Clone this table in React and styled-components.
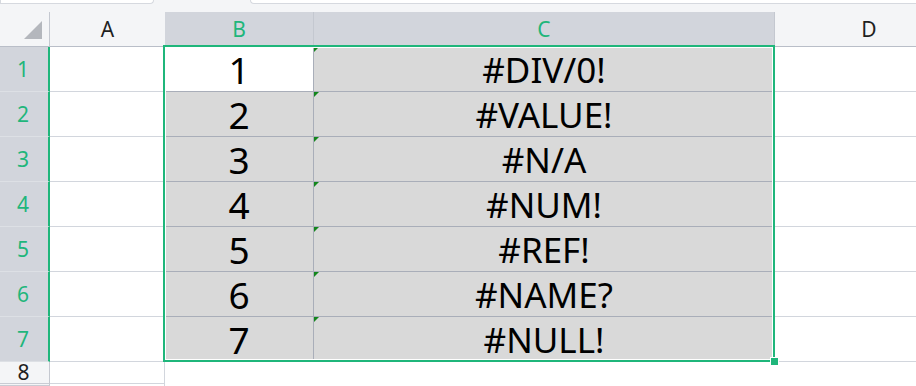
import React from "react";
import styled, { createGlobalStyle, css } from "styled-components";

//Sheet data: column B holds the index, column C the error value
const ROWS = [
  [1, "#DIV/0!"],
  [2, "#VALUE!"],
  [3, "#N/A"],
  [4, "#NUM!"],
  [5, "#REF!"],
  [6, "#NAME?"],
  [7, "#NULL!"],
];

const COLUMNS = ["A", "B", "C", "D"];
const SELECTED_COLS = ["B", "C"];

const GREEN = "#1fb67b";
const GRID = "#d2d6dd";
const GRID_DARK = "#a9aeb9";
const HEAD_BG = "#f4f5f7";
const HEAD_SEL = "#d2d5dc";

//------------------------------------------------------------//

const App = () => {
  return (
    <>
      <GlobalStyle />
      <TOPSTRIP>
        <NAMEBOX />
        <FORMULABOX />
      </TOPSTRIP>

      <SHEET>
        <CORNER>
          <CornerMark />
        </CORNER>
        {COLUMNS.map((col) => (
          <COLHEAD key={col} $selected={SELECTED_COLS.includes(col)}>
            {col}
          </COLHEAD>
        ))}

        {ROWS.map(([num, err], i) => (
          <React.Fragment key={num}>
            <ROWHEAD $selected>{i + 1}</ROWHEAD>
            <CELL />
            <CELL $selected $active={i === 0} $big>
              {num}
            </CELL>
            <CELL $selected>
              <ERRORMARK />
              {err}
            </CELL>
            <CELL />
          </React.Fragment>
        ))}

        {/* rows below the data block */}
        <ROWHEAD>8</ROWHEAD>
        <CELL />
        <CELL $plain />
        <CELL $plain />
        <CELL $plain />

        <ROWHEAD />
        <CELL $open />
        <CELL $plain />
        <CELL $plain />
        <CELL $plain />

        {/* range outline drawn over B1:C7 */}
        <SELECTION>
          <FILLHANDLE />
        </SELECTION>
      </SHEET>
    </>
  );
};

const CornerMark = () => (
  <svg width="18" height="18" viewBox="0 0 18 18">
    <polygon points="18,0 18,18 0,18" fill="#b4b7bd" />
  </svg>
);

/*-----------------------*\
            CSS
\*-----------------------*/

const GlobalStyle = createGlobalStyle`
  * {
    box-sizing: border-box;
  }

  body {
    margin: 0;
    background: #fff;
    font-family: "Noto Sans", "Open Sans", sans-serif;
    overflow: hidden;
  }
`;

const TOPSTRIP = styled.div`
  height: 12px;
  background: ${HEAD_BG};
  display: flex;
  align-items: flex-start;
  justify-content: space-between;
`;

const NAMEBOX = styled.div`
  width: 154px;
  height: 4px;
  background: #fff;
  border: 1px solid #d6d9df;
  border-top: 0;
  border-radius: 0 0 4px 0;
`;

const FORMULABOX = styled.div`
  width: 666px;
  height: 4px;
  background: #fff;
  border: 1px solid #d6d9df;
  border-top: 0;
  border-right: 0;
  border-radius: 0 0 0 4px;
`;

const SHEET = styled.div`
  position: relative;
  display: grid;
  grid-template-columns: 50px 115px 149px 461px 188px;
  grid-template-rows: 35px repeat(7, 45px) 22px 1fr;
  height: 374px;
  width: 100%;
  overflow: hidden;
`;

const CORNER = styled.div`
  background: ${HEAD_BG};
  border-right: 1px solid #c4c8d0;
  border-bottom: 1px solid #b9bec8;
  display: flex;
  align-items: flex-end;
  justify-content: flex-end;
  padding: 0 7px 7px 0;
`;

const COLHEAD = styled.div`
  display: flex;
  align-items: center;
  justify-content: center;
  font-size: 21px;
  line-height: 1;
  color: #1f1f1f;
  background: ${HEAD_BG};
  border-bottom: 1px solid #b9bec8;

  ${({ $selected }) =>
    $selected &&
    css`
      background: ${HEAD_SEL};
      color: ${GREEN};
      border-right: 1px solid #c4c8d0;
    `}
`;

const ROWHEAD = styled.div`
  display: flex;
  align-items: center;
  justify-content: center;
  padding-right: 2px;
  font-size: 21px;
  line-height: 1;
  color: #1f1f1f;
  background: ${HEAD_BG};
  border-right: 1px solid #c4c8d0;
  border-bottom: 1px solid #c9ccd4;

  ${({ $selected }) =>
    $selected &&
    css`
      background: ${HEAD_SEL};
      color: ${GREEN};
      border-right: 2px solid ${GREEN};
      border-bottom: 1px solid #dde0e5;
    `}
`;

const CELL = styled.div`
  position: relative;
  display: flex;
  align-items: center;
  justify-content: center;
  font-size: 35px;
  line-height: 1;
  color: #000;
  background: #fff;
  border-right: 1px solid ${GRID};
  border-bottom: 1px solid ${GRID};

  ${({ $selected }) =>
    $selected &&
    css`
      background: #d9d9d9;
      border-color: ${GRID_DARK};
    `}

  ${({ $active }) =>
    $active &&
    css`
      background: #fff;
    `}

  ${({ $big }) =>
    $big &&
    css`
      font-size: 37px;
    `}

  ${({ $plain }) =>
    $plain &&
    css`
      border: 0;
    `}

  ${({ $open }) =>
    $open &&
    css`
      border-bottom: 0;
    `}
`;

const ERRORMARK = styled.span`
  position: absolute;
  top: 0;
  left: 0;
  width: 0;
  height: 0;
  border-top: 5px solid #13861c;
  border-right: 5px solid transparent;
`;

const SELECTION = styled.div`
  grid-column: 3 / 5;
  grid-row: 2 / 9;
  position: absolute;
  inset: -2px 0 0 -2px;
  border: 2px solid ${GREEN};
  box-shadow: inset 0 0 0 1px #fff;
  pointer-events: none;
`;

const FILLHANDLE = styled.div`
  position: absolute;
  right: -5px;
  bottom: -5px;
  width: 7px;
  height: 7px;
  background: ${GREEN};
  outline: 1px solid #fff;
`;

export default App;
